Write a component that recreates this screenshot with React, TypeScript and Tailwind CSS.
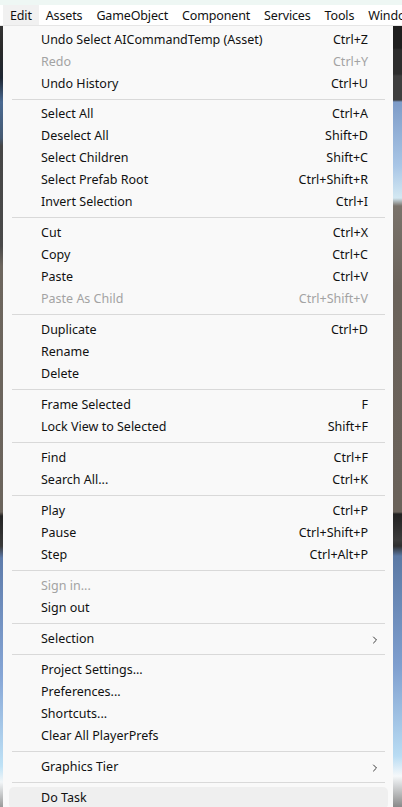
import { ChevronRight } from 'lucide-react'

type Item =
  | { kind: 'item'; label: string; shortcut?: string; disabled?: boolean; submenu?: boolean; active?: boolean }
  | { kind: 'sep'; tight?: boolean }

const items: Item[] = [
  { kind: 'item', label: 'Undo Select AICommandTemp (Asset)', shortcut: 'Ctrl+Z' },
  { kind: 'item', label: 'Redo', shortcut: 'Ctrl+Y', disabled: true },
  { kind: 'item', label: 'Undo History', shortcut: 'Ctrl+U' },
  { kind: 'sep', tight: true },
  { kind: 'item', label: 'Select All', shortcut: 'Ctrl+A' },
  { kind: 'item', label: 'Deselect All', shortcut: 'Shift+D' },
  { kind: 'item', label: 'Select Children', shortcut: 'Shift+C' },
  { kind: 'item', label: 'Select Prefab Root', shortcut: 'Ctrl+Shift+R' },
  { kind: 'item', label: 'Invert Selection', shortcut: 'Ctrl+I' },
  { kind: 'sep' },
  { kind: 'item', label: 'Cut', shortcut: 'Ctrl+X' },
  { kind: 'item', label: 'Copy', shortcut: 'Ctrl+C' },
  { kind: 'item', label: 'Paste', shortcut: 'Ctrl+V' },
  { kind: 'item', label: 'Paste As Child', shortcut: 'Ctrl+Shift+V', disabled: true },
  { kind: 'sep' },
  { kind: 'item', label: 'Duplicate', shortcut: 'Ctrl+D' },
  { kind: 'item', label: 'Rename' },
  { kind: 'item', label: 'Delete' },
  { kind: 'sep' },
  { kind: 'item', label: 'Frame Selected', shortcut: 'F' },
  { kind: 'item', label: 'Lock View to Selected', shortcut: 'Shift+F' },
  { kind: 'sep' },
  { kind: 'item', label: 'Find', shortcut: 'Ctrl+F' },
  { kind: 'item', label: 'Search All...', shortcut: 'Ctrl+K' },
  { kind: 'sep' },
  { kind: 'item', label: 'Play', shortcut: 'Ctrl+P' },
  { kind: 'item', label: 'Pause', shortcut: 'Ctrl+Shift+P' },
  { kind: 'item', label: 'Step', shortcut: 'Ctrl+Alt+P' },
  { kind: 'sep' },
  { kind: 'item', label: 'Sign in...', disabled: true },
  { kind: 'item', label: 'Sign out' },
  { kind: 'sep' },
  { kind: 'item', label: 'Selection', submenu: true },
  { kind: 'sep' },
  { kind: 'item', label: 'Project Settings...' },
  { kind: 'item', label: 'Preferences...' },
  { kind: 'item', label: 'Shortcuts...' },
  { kind: 'item', label: 'Clear All PlayerPrefs' },
  { kind: 'sep' },
  { kind: 'item', label: 'Graphics Tier', submenu: true },
  { kind: 'sep' },
  { kind: 'item', label: 'Do Task', active: true },
]

const topMenus = ['Edit', 'Assets', 'GameObject', 'Component', 'Services', 'Tools', 'Window']

function MenuRow({ item }: { item: Item }) {
  if (item.kind === 'sep') {
    return (
      <div className={`flex items-center ${item.tight ? 'h-[8px]' : 'h-[9px]'}`}>
        <div className="ml-[9px] mr-[8px] h-px flex-1 bg-[#d9d9d9]" />
      </div>
    )
  }

  const spacing = item.active
    ? 'ml-[6px] mr-[5px] pl-[32px] pr-[20px] rounded-[5px] bg-[#efefef]'
    : item.submenu
      ? 'pl-[38px] pr-[12px]'
      : 'pl-[38px] pr-[25px]'

  return (
    <div
      className={`flex items-center h-[22px] pt-[1px] ${spacing} ${item.disabled ? 'text-[#a3a3a3]' : 'text-[#111]'}`}
    >
      <span className="flex-1 whitespace-nowrap">{item.label}</span>
      {item.shortcut && <span className="whitespace-nowrap">{item.shortcut}</span>}
      {item.submenu && <ChevronRight className="w-[12px] h-[12px] text-[#3a3a3a]" strokeWidth={2} />}
    </div>
  )
}

export default function App() {
  return (
    <div className="h-[807px] w-[402px] overflow-hidden bg-[#2b2b2b] text-[12.5px] font-['Noto_Sans','Liberation_Sans',sans-serif] leading-none">
      {/* Title bar remnant + menu bar */}
      <div className="h-[5px] bg-[#eef7f4]" />
      <div className="flex h-[21px] bg-white pl-[3px] border-b border-[#e6e6e6] text-[#111]">
        {topMenus.map((m, i) => (
          <div
            key={m}
            className={`flex items-center px-[7px] pt-[2px] whitespace-nowrap tracking-[-0.15px] ${i === 0 ? 'bg-[#f1f1f1]' : ''}`}
          >
            {m}
          </div>
        ))}
      </div>

      {/* Editor behind the dropdown */}
      <div className="relative flex h-[781px]">
        <div className="w-[3px] bg-[linear-gradient(to_bottom,#333_0px,#2a2a2a_24px,#1e2733_52px,#4a6a92_76px,#465a72_112px,#474747_120px,#4a4a4a_220px,#6d665e_240px,#6b645c_486px,#252525_490px,#3a3a3a_520px,#5e7cab_532px,#86a6d6_650px,#bfe2f6_740px,#f2f6f8_756px,#9a9a9a_781px)]" />
        <div className="flex-1" />
        <div className="w-[9px] bg-[linear-gradient(to_bottom,#1e1e1e_0px,#1e1e1e_22px,#2d2d2d_24px,#2d2d2d_48px,#3e3e3e_50px,#3e3e3e_74px,#7e9cc8_76px,#a9c6e6_140px,#d3e8f2_172px,#7a736b_180px,#6b635b_260px,#6a625a_486px,#222_488px,#3b3b3b_514px,#2f2f2f_520px,#5b79a4_530px,#7f9fcf_640px,#b9dcf3_730px,#f5f8fa_750px,#8a8a8a_781px)]" />

        {/* Edit dropdown */}
        <div className="absolute left-[3px] top-0 w-[390px] h-[790px] bg-[#f9f9f9] pt-[3px]">
          {items.map((item, i) => (
            <MenuRow key={i} item={item} />
          ))}
        </div>
      </div>
    </div>
  )
}
